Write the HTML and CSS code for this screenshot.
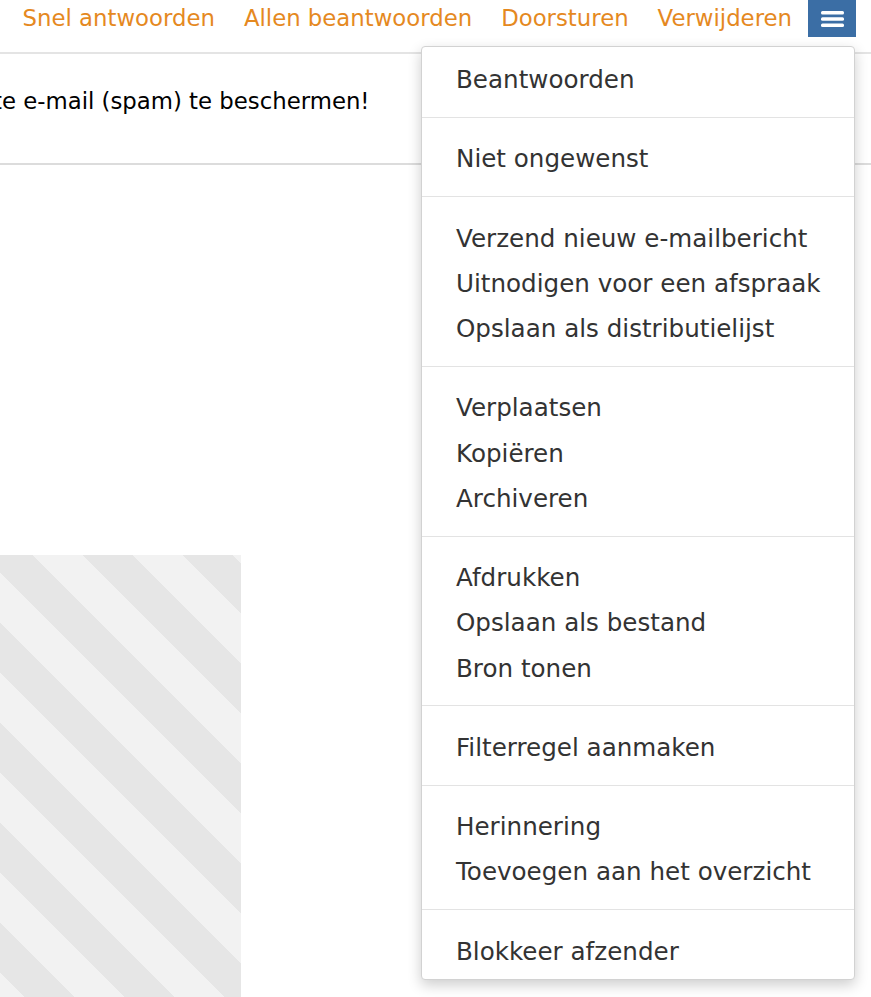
FILE: index.html
```html
<!DOCTYPE html>
<html lang="nl">
<head>
  <meta charset="UTF-8" />
  <meta name="viewport" content="width=device-width, initial-scale=1.0"/>
  <title>Bericht</title>
  <link rel="stylesheet" href="styles.css">
</head>
<body>
  <div class="toolbar">
    <a href="#" class="action">Snel antwoorden</a>
    <a href="#" class="action">Allen beantwoorden</a>
    <a href="#" class="action">Doorsturen</a>
    <a href="#" class="action">Verwijderen</a>
    <button class="menu-toggle" aria-label="Meer acties">
      <svg width="23" height="18" viewBox="0 0 23 18">
        <rect x="0" y="1" width="23" height="3.4" rx="1.5" fill="#fff"/>
        <rect x="0" y="7.3" width="23" height="3.4" rx="1.5" fill="#fff"/>
        <rect x="0" y="13.6" width="23" height="3.4" rx="1.5" fill="#fff"/>
      </svg>
    </button>
  </div>

  <div class="notice">
    <p>te e-mail (spam) te beschermen!</p>
  </div>

  <div class="preview"></div>

  <!-- dropdown met extra acties -->
  <ul class="dropdown">
    <li class="item">Beantwoorden</li>
    <li class="divider"></li>
    <li class="item">Niet ongewenst</li>
    <li class="divider"></li>
    <li class="item">Verzend nieuw e-mailbericht</li>
    <li class="item">Uitnodigen voor een afspraak</li>
    <li class="item">Opslaan als distributielijst</li>
    <li class="divider"></li>
    <li class="item">Verplaatsen</li>
    <li class="item">Kopiëren</li>
    <li class="item">Archiveren</li>
    <li class="divider"></li>
    <li class="item">Afdrukken</li>
    <li class="item">Opslaan als bestand</li>
    <li class="item">Bron tonen</li>
    <li class="divider"></li>
    <li class="item">Filterregel aanmaken</li>
    <li class="divider"></li>
    <li class="item">Herinnering</li>
    <li class="item">Toevoegen aan het overzicht</li>
    <li class="divider"></li>
    <li class="item">Blokkeer afzender</li>
  </ul>
</body>
</html>
```

FILE: styles.css
```css
body {
  margin: 0;
  padding: 0;
  background: #fff;
  font-family: 'DejaVu Sans', Verdana, sans-serif;
  color: #000;
  height: 100vh;
  overflow: hidden;
  position: relative;
}

.toolbar {
  display: flex;
  justify-content: flex-end;
  align-items: flex-start;
  gap: 29px;
  padding: 0 15px 0 0;
  height: 52px;
  border-bottom: 2px solid #e4e4e4;
}

.action {
  font-size: 22.8px;
  line-height: 37px;
  color: #e5891f;
  text-decoration: none;
}

.menu-toggle {
  width: 48px;
  height: 37px;
  margin-left: -13px;
  padding: 0;
  border: none;
  border-radius: 0;
  background: #3b6ea5;
  display: flex;
  align-items: center;
  justify-content: center;
  cursor: pointer;
}

.notice {
  padding: 32px 0 47px;
  border-bottom: 2px solid #dcdcdc;
}

.notice p {
  margin: 0 0 0 -7px;
  font-size: 22.8px;
  line-height: 30px;
  white-space: nowrap;
}

.preview {
  margin-top: 390px;
  width: 241px;
  height: 460px;
  background-color: #f2f2f2;
  background-image: linear-gradient(45deg,
    transparent 25%, #e6e6e6 25%, #e6e6e6 50%,
    transparent 50%, transparent 75%, #e6e6e6 75%);
  background-size: 100px 100px;
  background-position: 33px 0;
}

.dropdown {
  position: absolute;
  top: 46px;
  right: 16px;
  width: 432px;
  margin: 0;
  padding: 8px 0 7px;
  list-style: none;
  background: #fff;
  border: 1px solid #d2d2d2;
  border-radius: 4px;
  box-shadow: 0 5px 14px rgba(0, 0, 0, 0.2);
}

.item {
  padding: 5px 34px 0;
  font-size: 24.6px;
  line-height: 40.25px;
  color: #333;
  white-space: nowrap;
  cursor: pointer;
}

.divider {
  height: 1px;
  margin: 16.5px 0;
  background: #e3e3e3;
}
```
